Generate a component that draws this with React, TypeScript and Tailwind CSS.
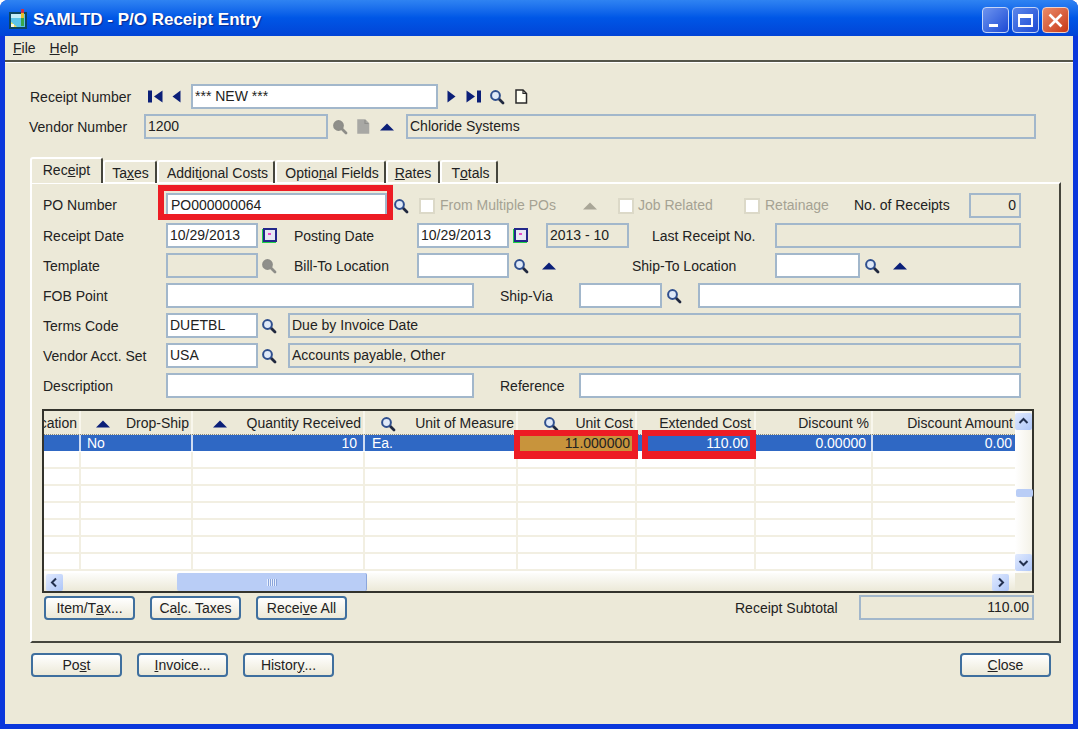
import { ReactNode } from "react";

const Mag = ({ off = false, className = "" }: { off?: boolean; className?: string }) => (
  <svg width="16" height="16" viewBox="0 0 16 16" className={`shrink-0 ${className}`}>
    <line x1="9.5" y1="9.5" x2="14" y2="14" stroke={off ? "#8d8d88" : "#20283f"} strokeWidth="2.8" strokeLinecap="round" />
    <circle cx="6.5" cy="6.5" r="4.4" fill={off ? "#8f8f8b" : "#dfe9f8"} stroke={off ? "#8d8d88" : "#2f4f8e"} strokeWidth="2" />
  </svg>
);

const UpArrow = ({ off = false, className = "" }: { off?: boolean; className?: string }) => (
  <svg width="14" height="8" viewBox="0 0 14 8" className={`shrink-0 ${className}`}>
    <polygon points="7,0.5 14,7.5 0,7.5" fill={off ? "#a9a697" : "#0b1f78"} />
  </svg>
);

const Doc = ({ off = false, className = "" }: { off?: boolean; className?: string }) => (
  <svg width="14" height="15" viewBox="0 0 14 15" className={`shrink-0 ${className}`}>
    <path d="M2 1 H9 L12.5 4.5 V14 H2 Z" fill={off ? "#a8a8a4" : "#fffff4"} stroke={off ? "#a8a8a4" : "#2a2a2a"} strokeWidth="1.5" />
    <path d="M9 1 V4.5 H12.5" fill="none" stroke={off ? "#8f8f8b" : "#2a2a2a"} strokeWidth="1.2" />
  </svg>
);

const Cal = ({ className = "" }: { className?: string }) => (
  <svg width="15" height="15" viewBox="0 0 15 15" className={`shrink-0 ${className}`}>
    <rect x="0" y="1" width="14" height="14" fill="#22d04a" />
    <rect x="1" y="0" width="14" height="14" fill="#23278a" />
    <rect x="3" y="2" width="10" height="10" fill="#e8e8f4" />
    <rect x="6" y="5" width="3" height="2" fill="#e84fc8" />
  </svg>
);

const NavArrow = ({ dir, bar = false, className = "" }: { dir: "l" | "r"; bar?: boolean; className?: string }) => (
  <svg width={bar ? 15 : 9} height="13" viewBox={bar ? "0 0 15 13" : "0 0 9 13"} className={`shrink-0 ${className}`}>
    {bar && <rect x={dir === "l" ? 0 : 11} y="0.5" width="4" height="12" fill="#0b1f78" />}
    {dir === "l" ? (
      <polygon points={bar ? "14.5,0.5 14.5,12.5 6,6.5" : "8.5,0.5 8.5,12.5 0.5,6.5"} fill="#0b1f78" />
    ) : (
      <polygon points={bar ? "0.5,0.5 0.5,12.5 9,6.5" : "0.5,0.5 0.5,12.5 8.5,6.5"} fill="#0b1f78" />
    )}
  </svg>
);

const Box = ({ w, on = false, right = false, className = "", children }: { w: string; on?: boolean; right?: boolean; className?: string; children?: ReactNode }) => (
  <div className={`${w} h-[25px] shrink-0 border-2 border-[#a2b7cb] flex items-center px-[2px] whitespace-nowrap overflow-hidden ${on ? "bg-white" : "bg-[#ece9d8]"} ${right ? "justify-end" : ""} ${className}`}>
    {children}
  </div>
);

const Btn = ({ className = "", children }: { className?: string; children: ReactNode }) => (
  <div className={`w-[91px] h-[24px] shrink-0 rounded-[4px] border-2 border-[#3f6f9e] bg-linear-to-b from-white to-[#ece9d8] flex items-center justify-center text-[14px] ${className}`}>
    {children}
  </div>
);

const Row = ({ children }: { children: ReactNode }) => <div className="flex items-center h-[25px] text-[14px]">{children}</div>;

const Label = ({ w, className = "", children }: { w: string; className?: string; children: ReactNode }) => (
  <div className={`${w} shrink-0 whitespace-nowrap pt-[2px] ${className}`}>{children}</div>
);

const Check = ({ className = "" }: { className?: string }) => <div className={`w-[16px] h-[16px] shrink-0 bg-white border-2 border-[#dcd9c8] ${className}`} />;

const Tab = ({ w, active = false, className = "", children }: { w: string; active?: boolean; className?: string; children: ReactNode }) => (
  <div className={`${w} shrink-0 rounded-t-[3px] border-t-2 border-l-2 border-white border-r-2 border-r-[#45453c] flex items-center justify-center text-[14px] whitespace-nowrap ${active ? "h-[26px] pb-[1px] bg-[#ece9d8] relative z-10" : "h-[23px] pt-[1px]"} ${className}`}>
    {children}
  </div>
);

const Head = ({ icon, className = "", children }: { icon?: ReactNode; className?: string; children: string }) => (
  <div className={`h-full flex items-center justify-end overflow-hidden border-r-2 border-[#f8f6ec] pr-[2px] pt-[2px] relative text-[14px] ${className}`}>
    {icon}
    <span className="whitespace-nowrap shrink-0">{children}</span>
  </div>
);

const Cell = ({ right = false, className = "", children }: { right?: boolean; className?: string; children?: ReactNode }) => (
  <div className={`h-full flex items-center whitespace-nowrap text-[14px] leading-[16px] pb-[1px] border-r-2 border-[#cfdcf2] ${right ? "justify-end pr-[5px]" : "pl-[6px]"} ${className}`}>
    {children}
  </div>
);

const gridCols = "grid grid-cols-[37px_112px_172px_153px_119px_119px_117px_140px]";

const ScrollBtn = ({ d, className = "" }: { d: string; className?: string }) => (
  <div className={`w-[17px] h-[17px] shrink-0 rounded-[2px] bg-linear-to-br from-[#e1eafe] to-[#aec6f8] flex items-center justify-center ${className}`}>
    <svg width="11" height="11" viewBox="0 0 11 11">
      <path d={d} fill="none" stroke="#22304f" strokeWidth="2" />
    </svg>
  </div>
);

export default function App() {
  const emptyRows = [0, 1, 2, 3, 4, 5, 6];

  return (
    <div className="w-[1078px] h-[729px] flex flex-col overflow-hidden rounded-t-[8px] bg-[#0a37dc] text-[#222] font-['Liberation_Sans',Arial,sans-serif]">
      <div className="h-[36px] shrink-0 flex items-center pl-[9px] pr-[9px] bg-linear-to-b from-[#2f83f2] via-[#0056e6] to-[#0244d6]">
        <svg width="19" height="21" viewBox="0 0 19 21" className="shrink-0 mt-[3px]">
          <rect x="0" y="3" width="18" height="17" fill="#0d4660" />
          <rect x="2" y="5" width="14" height="13" fill="#5cc4e8" />
          <rect x="2" y="5" width="12" height="4" fill="#c4ecf8" />
          <polygon points="2,18 2,13 8,18" fill="#f4e04a" />
          <rect x="2" y="15" width="3" height="3" fill="#f8f8e8" />
          <rect x="12" y="0" width="3" height="4" fill="#c8324a" />
          <rect x="12" y="4" width="3" height="5" fill="#e8c02a" />
          <rect x="12" y="9" width="3" height="8" fill="#38a848" />
        </svg>
        <div className="ml-[5px] pt-[3px] text-white font-bold text-[17px] whitespace-nowrap [text-shadow:1px_1px_1px_#0a2a90]">SAMLTD - P/O Receipt Entry</div>
        <div className="ml-auto flex gap-[3px] pt-[4px]">
          <div className="w-[27px] h-[26px] rounded-[4px] border border-[#c5d6f7] bg-linear-to-br from-[#6e93ee] to-[#1d48d4] flex items-end pl-[6px] pb-[5px]">
            <div className="w-[9px] h-[3px] bg-white" />
          </div>
          <div className="w-[27px] h-[26px] rounded-[4px] border border-[#c5d6f7] bg-linear-to-br from-[#5c86ea] to-[#1d48d4] flex items-center justify-center">
            <div className="w-[15px] h-[13px] border-2 border-t-[4px] border-white" />
          </div>
          <div className="w-[27px] h-[26px] rounded-[4px] border border-[#f0d0c4] bg-linear-to-br from-[#e98a68] to-[#c8350f] flex items-center justify-center">
            <svg width="15" height="15" viewBox="0 0 15 15">
              <path d="M1.5 1.5 L13.5 13.5 M13.5 1.5 L1.5 13.5" stroke="#fff" strokeWidth="2.6" />
            </svg>
          </div>
        </div>
      </div>

      <div className="ml-[5px] mr-[5px] mb-[5px] flex-1 min-h-0 bg-[#ece9d8] flex flex-col">
        <div className="h-[24px] shrink-0 flex items-center pl-[8px] gap-[14px] text-[14px]">
          <span><u>F</u>ile</span>
          <span><u>H</u>elp</span>
        </div>
        <div className="h-[2px] shrink-0 bg-[#55554a]" />
        <div className="h-[1px] shrink-0 bg-white" />

        <div className="pl-[25px] pt-[21px]">
          <Row>
            <Label w="w-[118px]">Receipt Number</Label>
            <NavArrow dir="l" bar />
            <NavArrow dir="l" className="ml-[9px]" />
            <Box w="w-[247px]" on className="ml-[10px]">*** NEW ***</Box>
            <NavArrow dir="r" className="ml-[9px]" />
            <NavArrow dir="r" bar className="ml-[10px]" />
            <Mag className="ml-[8px]" />
            <Doc className="ml-[9px]" />
          </Row>
          <div className="mt-[5px]">
            <Row>
              <Label w="w-[114px]" className="-ml-[1px]">Vendor Number</Label>
              <Box w="w-[184px]" className="ml-[1px]">1200</Box>
              <Mag off className="ml-[4px]" />
              <Doc off className="ml-[8px]" />
              <UpArrow className="ml-[10px]" />
              <Box w="w-[630px]" className="ml-[12px]">Chloride Systems</Box>
            </Row>
          </div>
        </div>

        <div className="pl-[25px] mt-[19px] flex items-end h-[25px] relative z-10 -mb-[1px]">
          <Tab w="w-[73px]" active>Rec<u>e</u>ipt</Tab>
          <Tab w="w-[54px]" className="pl-[1px]">Ta<u>x</u>es</Tab>
          <Tab w="w-[118px]" className="pl-[3px]">Addit<u>i</u>onal Costs</Tab>
          <Tab w="w-[111px]" className="pl-[3px]">Optio<u>n</u>al Fields</Tab>
          <Tab w="w-[54px]"><u>R</u>ates</Tab>
          <Tab w="w-[58px]" className="pl-[3px]">T<u>o</u>tals</Tab>
        </div>

        <div className="ml-[25px] w-[1031px] h-[461px] shrink-0 border-t-2 border-l-2 border-white border-r-2 border-r-[#45453c] border-b-2 border-b-[#45453c] pl-[11px] pt-[9px]">
          <div className="flex flex-col gap-[5px]">
            <Row>
              <Label w="w-[123px]" className="!pt-0">PO Number</Label>
              <div className="relative shrink-0">
                <Box w="w-[221px]" on className="pl-[3px]">PO000000064</Box>
                <div className="absolute -left-[8px] -right-[6px] -top-[8px] -bottom-[2px] border-[6px] border-[#ed1c24]" />
              </div>
              <Mag className="ml-[6px]" />
              <Check className="ml-[10px]" />
              <Label w="w-[120px]" className="ml-[5px] !pt-0 text-[#a5a293]">From Multiple POs</Label>
              <UpArrow off className="ml-[23px]" />
              <Check className="ml-[21px]" />
              <Label w="w-[77px]" className="ml-[4px] !pt-0 text-[#a5a293]">Job Related</Label>
              <Check className="ml-[29px]" />
              <Label w="w-[65px]" className="ml-[5px] !pt-0 text-[#a5a293]">Retainage</Label>
              <Label w="w-[99px]" className="ml-[24px] !pt-0">No. of Receipts</Label>
              <Box w="w-[52px]" right className="ml-[16px] pr-[3px]">0</Box>
            </Row>
            <Row>
              <Label w="w-[123px]">Receipt Date</Label>
              <Box w="w-[92px]" on>10/29/2013</Box>
              <Cal className="ml-[4px]" />
              <Label w="w-[123px]" className="ml-[17px]">Posting Date</Label>
              <Box w="w-[92px]" on>10/29/2013</Box>
              <Cal className="ml-[4px]" />
              <Box w="w-[83px]" className="ml-[18px]">2013 - 10</Box>
              <Label w="w-[105px]" className="ml-[23px]">Last Receipt No.</Label>
              <Box w="w-[246px]" className="ml-[18px]" />
            </Row>
            <Row>
              <Label w="w-[123px]">Template</Label>
              <Box w="w-[92px]" />
              <Mag off className="ml-[3px]" />
              <Label w="w-[123px]" className="ml-[17px]">Bill-To Location</Label>
              <Box w="w-[92px]" on />
              <Mag className="ml-[4px]" />
              <UpArrow className="ml-[13px]" />
              <Label w="w-[143px]" className="ml-[76px]">Ship-To Location</Label>
              <Box w="w-[85px]" on />
              <Mag className="ml-[4px]" />
              <UpArrow className="ml-[13px]" />
            </Row>
            <Row>
              <Label w="w-[123px]">FOB Point</Label>
              <Box w="w-[308px]" on />
              <Label w="w-[79px]" className="ml-[26px]">Ship-Via</Label>
              <Box w="w-[83px]" on />
              <Mag className="ml-[4px]" />
              <Box w="w-[323px]" on className="ml-[16px]" />
            </Row>
            <Row>
              <Label w="w-[123px]">Terms Code</Label>
              <Box w="w-[92px]" on>DUETBL</Box>
              <Mag className="ml-[3px]" />
              <Box w="w-[733px]" className="ml-[11px]">Due by Invoice Date</Box>
            </Row>
            <Row>
              <Label w="w-[123px]">Vendor Acct. Set</Label>
              <Box w="w-[92px]" on>USA</Box>
              <Mag className="ml-[3px]" />
              <Box w="w-[733px]" className="ml-[11px]">Accounts payable, Other</Box>
            </Row>
            <Row>
              <Label w="w-[123px]">Description</Label>
              <Box w="w-[308px]" on />
              <Label w="w-[79px]" className="ml-[26px]">Reference</Label>
              <Box w="w-[442px]" on />
            </Row>
          </div>

          <div className="mt-[11px] -ml-[1px] w-[992px] h-[184px] border-2 border-[#33332c] flex flex-col">
            <div className="flex-1 min-h-0 flex">
              <div className="w-[971px] shrink-0 flex flex-col bg-white">
                <div className={`${gridCols} h-[24px] shrink-0 bg-[#ece9d8] border-b border-dotted border-[#8a8878]`}>
                  <Head>Location</Head>
                  <Head icon={<UpArrow className="absolute left-[15px]" />}>Drop-Ship</Head>
                  <Head icon={<UpArrow className="absolute left-[20px]" />}>Quantity Received</Head>
                  <Head icon={<Mag className="absolute left-[15px]" />}>Unit of Measure</Head>
                  <Head icon={<Mag className="absolute left-[25px]" />}>Unit Cost</Head>
                  <Head className="!pr-[3px]">Extended Cost</Head>
                  <Head>Discount %</Head>
                  <Head className="!pr-0 !border-0">Discount Amount</Head>
                </div>
                <div className={`${gridCols} grid-rows-[16px] h-[16px] mb-[1px] shrink-0 bg-[#2f68c4] text-white`}>
                  <Cell />
                  <Cell>No</Cell>
                  <Cell right className="!pr-[6px]">10</Cell>
                  <Cell className="pl-[7px]">Ea.</Cell>
                  <Cell right className="relative bg-[#c8943c] text-[#222] !border-[#c8943c]">
                    11.000000
                    <div className="absolute -left-[4px] -right-[3px] -top-[5px] -bottom-[8px] border-[6px] border-b-[8px] border-[#ed1c24]" />
                  </Cell>
                  <Cell right className="relative !pr-[6px]">
                    110.00
                    <div className="absolute left-[5px] -right-[2px] -top-[5px] -bottom-[8px] border-[6px] border-b-[8px] border-[#ed1c24]" />
                  </Cell>
                  <Cell right>0.00000</Cell>
                  <Cell right className="!pr-[1px] !border-0">0.00</Cell>
                </div>
                <div className="flex-1 min-h-0 overflow-hidden">
                  {emptyRows.map((r) => (
                    <div key={r} className={`${gridCols} h-[17px] border-b-2 border-[#f2efe2]`}>
                      <div className="border-r-2 border-[#f2efe2]" />
                      <div className="border-r-2 border-[#f2efe2]" />
                      <div className="border-r-2 border-[#f2efe2]" />
                      <div className="border-r-2 border-[#f2efe2]" />
                      <div className="border-r-2 border-[#f2efe2]" />
                      <div className="border-r-2 border-[#f2efe2]" />
                      <div className="border-r-2 border-[#f2efe2]" />
                      <div />
                    </div>
                  ))}
                </div>
              </div>
              <div className="flex-1 flex flex-col items-center justify-between py-[2px] bg-linear-to-r from-white to-[#f4f2e8] relative">
                <ScrollBtn d="M1.5 7 L5.5 3 L9.5 7" />
                <div className="absolute top-[78px] left-[1px] w-[17px] h-[8px] rounded-[2px] bg-[#b9cdf6]" />
                <ScrollBtn d="M1.5 4 L5.5 8 L9.5 4" />
              </div>
            </div>
            <div className="h-[18px] shrink-0 flex">
              <div className="w-[971px] shrink-0 flex items-center bg-linear-to-b from-[#fdfdfb] to-[#ece9d8] relative pl-[2px] pr-[6px]">
                <ScrollBtn d="M7 1.5 L3 5.5 L7 9.5" />
                <div className="absolute left-[133px] top-0 w-[190px] h-[18px] rounded-[2px] bg-[#b9cdf6] border-r border-[#8ba6dc] flex items-center justify-center">
                  <div className="w-[10px] h-[7px] bg-[repeating-linear-gradient(90deg,#e8effd_0,#e8effd_1px,#8ba6dc_1px,#8ba6dc_2px)]" />
                </div>
                <ScrollBtn d="M4 1.5 L8 5.5 L4 9.5" className="ml-auto" />
              </div>
              <div className="flex-1 bg-[#ece9d8]" />
            </div>
          </div>

          <div className="mt-[3px] ml-[1px] flex items-center text-[14px]">
            <Btn>Item/T<u>a</u>x...</Btn>
            <Btn className="ml-[15px]">Ca<u>l</u>c. Taxes</Btn>
            <Btn className="ml-[15px]">Recei<u>v</u>e All</Btn>
            <Label w="w-[106px]" className="ml-[388px] !pt-0">Receipt Subtotal</Label>
            <Box w="w-[175px]" right className="ml-[18px] pr-[3px] -mt-[2px]">110.00</Box>
          </div>
        </div>

        <div className="pl-[26px] pr-[22px] mt-[10px] flex items-center">
          <Btn>Po<u>s</u>t</Btn>
          <Btn className="ml-[15px]"><u>I</u>nvoice...</Btn>
          <Btn className="ml-[15px]">Histor<u>y</u>...</Btn>
          <Btn className="ml-auto"><u>C</u>lose</Btn>
        </div>
      </div>
    </div>
  );
}
